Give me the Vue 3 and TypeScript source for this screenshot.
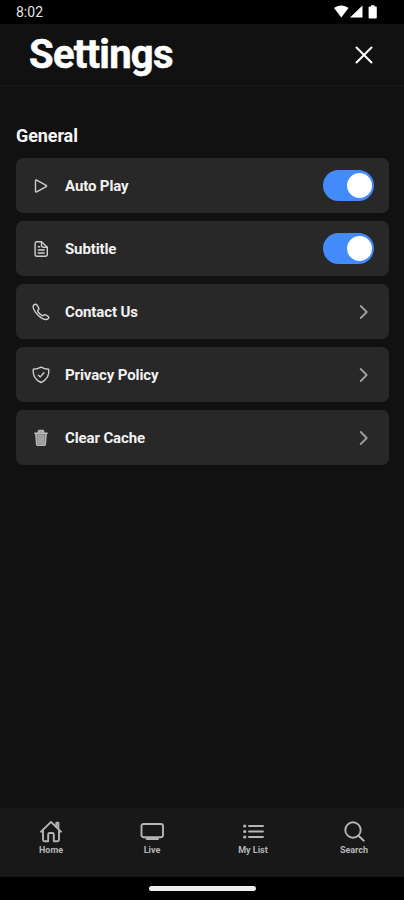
<script setup lang="ts">
import { ref } from 'vue'

type IconName = 'play' | 'document' | 'phone' | 'shield' | 'trash'

interface Setting {
  label: string
  icon: IconName
  toggle: boolean
}

const settings: Setting[] = [
  { label: 'Auto Play', icon: 'play', toggle: true },
  { label: 'Subtitle', icon: 'document', toggle: true },
  { label: 'Contact Us', icon: 'phone', toggle: false },
  { label: 'Privacy Policy', icon: 'shield', toggle: false },
  { label: 'Clear Cache', icon: 'trash', toggle: false },
]

const enabled = ref<Record<string, boolean>>({ 'Auto Play': true, Subtitle: true })

function activate(item: Setting) {
  if (item.toggle) enabled.value[item.label] = !enabled.value[item.label]
}

const tabs = ['Home', 'Live', 'My List', 'Search']
</script>

<template>
  <div class="screen">
    <div class="status">
      <span class="time">8:02</span>
      <svg class="signals" width="44" height="14" viewBox="0 0 44 14" fill="#fff">
        <path d="M0 3C4 -.5 10.500 -.5 14.500 3L7.300 12.500Z" />
        <path d="M28.500 .5V12.500H16Z" />
        <path d="M35.500 1.500h1.500V.3h3.500v1.200H42q.8 0 .8.900V12.600q0 .9-.8.900h-6.500q-.9 0-.9-.9V2.400q0-.9.900-.9Z" />
      </svg>
    </div>

    <header class="header">
      <h1>Settings</h1>
      <button class="close" aria-label="Close">
        <svg width="18" height="18" viewBox="0 0 18 18" fill="none" stroke="#fff" stroke-width="2" stroke-linecap="round">
          <path d="M1.500 1.500 16.500 16.500M16.500 1.500 1.500 16.500" />
        </svg>
      </button>
    </header>

    <main class="content">
      <h2>General</h2>
      <div class="list">
        <div v-for="item in settings" :key="item.label" class="row" @click="activate(item)">
          <svg class="icon" width="20" height="20" viewBox="0 0 20 20" fill="none" stroke="#cecece" stroke-width="1.400" stroke-linejoin="round" stroke-linecap="round">
            <path v-if="item.icon === 'play'" d="M4.500 5q0-1.300 1.100-.8l9.500 5.100q1 .7 0 1.400l-9.500 5.100q-1.100.5-1.100-.8Z" />
            <template v-else-if="item.icon === 'document'">
              <path d="M5.700 2.800h4.800l5.800 5.500v7q0 2-2 2H5.900q-1.800 0-1.800-2V4.600q0-1.800 1.600-1.800Z" />
              <path d="M10.500 3v3.600q0 1.700 1.700 1.700H16M7.200 11h6M7.200 14h6" />
              <path d="M7.200 7.800h1.500" />
            </template>
            <path v-else-if="item.icon === 'phone'" d="M3 2.800C1.600 4 2 6.800 4.400 10.200 7.400 14.300 12.500 18 15.400 17.500c1.100-.2 2.500-1.300 2.400-2.200-.1-.8-3.300-2.800-4.200-2.700-.9.200-1.300 1.300-2 1.200-1.400-.3-4.700-3.500-5-5 0-.7 1.200-1 1.300-1.900.1-.8-1.800-4-2.600-4.400-.6-.3-1.600-.1-2.300.3Z" />
            <template v-else-if="item.icon === 'shield'">
              <path d="M10 2.100C7.700 3.500 5 4.100 2.300 4.200c-.8 5.300 1.400 10.400 7.700 13.300 6.300-2.900 8.500-8 7.700-13.300C15 4.100 12.300 3.500 10 2.100Z" />
              <path d="m7.400 10.200 1.900 1.700 3.600-4.100" />
            </template>
            <template v-else>
              <path d="m4.800 6 .9 10.600q.1.800.9.800h6.800q.8 0 .9-.8L15.200 6" fill="#8c8c8c" stroke="#b8b8b8" />
              <path d="M3.800 5.200h12.400M6.900 4.700l.9-2.200h4.400l.9 2.200" fill="#a5a5a5" stroke="#bababa" />
              <path d="M7.800 7.200 8 15.500M10 7.200v8.300M12.200 7.200l-.2 8.300" stroke="#bbb" stroke-width=".9" />
            </template>
          </svg>
          <span class="label">{{ item.label }}</span>
          <span v-if="item.toggle" class="switch" :class="{ on: enabled[item.label] }" role="switch" :aria-checked="enabled[item.label]">
            <span class="knob"></span>
          </span>
          <svg v-else class="chevron" width="10" height="14" viewBox="0 0 10 14" fill="none" stroke="#a0a0a0" stroke-width="1.800" stroke-linecap="round" stroke-linejoin="round">
            <path d="M1.700 1 7.700 7l-6 6" />
          </svg>
        </div>
      </div>
    </main>

    <nav class="tabs">
      <a v-for="tab in tabs" :key="tab" class="tab">
        <svg width="24" height="24" viewBox="0 0 24 24" fill="none" stroke="#b5b5b5" stroke-width="1.900" stroke-linejoin="round" stroke-linecap="round">
          <path v-if="tab === 'Home'" d="M2 11.700 12 1.900l10 9.800M17.300 6V2.600h2.100v6.200M4 11v8.700q0 1.500 1.500 1.500h3.700v-6.700q0-1.500 1.500-1.500h2.600q1.500 0 1.500 1.500v6.700h3.700q1.500 0 1.500-1.500V11" />
          <template v-else-if="tab === 'Live'">
            <rect x="1.500" y="4" width="21.500" height="13.300" rx="2.200" />
            <path d="M6.700 19h11.300" stroke-width="2" />
          </template>
          <template v-else-if="tab === 'My List'">
            <path d="M8 6h14M8 11.500h14M8 17h14" />
            <path d="M3.700 6h.1M3.700 11.500h.1M3.700 17h.1" stroke-width="3.200" />
          </template>
          <template v-else>
            <circle cx="11" cy="10" r="7.700" />
            <path d="m16.500 15.700 5.300 5" />
          </template>
        </svg>
        <span class="tab-label">{{ tab }}</span>
      </a>
    </nav>
    <div class="gesture"><span></span></div>
  </div>
</template>

<style>
body {
  background: #000;
}
</style>

<style scoped>
.screen {
  width: 404px;
  height: 900px;
  display: flex;
  flex-direction: column;
  overflow: hidden;
  background: #111;
  color: #fff;
  font-family: Roboto, "Liberation Sans", sans-serif;
}
.status {
  height: 24px;
  flex: none;
  box-sizing: border-box;
  display: flex;
  align-items: center;
  justify-content: space-between;
  padding: 0 26px 0 16px;
  background: #000;
}
.time {
  font-size: 14px;
  color: #e4e4e4;
}
.header {
  height: 62px;
  flex: none;
  box-sizing: border-box;
  display: flex;
  align-items: center;
  justify-content: space-between;
  padding: 1px 31px 0 29px;
  border-bottom: 1px solid #1b1b1b;
}
h1 {
  margin: 0;
  font-size: 40px;
  line-height: 60px;
  font-weight: 700;
  letter-spacing: -0.75px;
  -webkit-text-stroke: 0.5px #fff;
}
.close {
  display: flex;
  margin: 0;
  padding: 0;
  border: 0;
  background: none;
}
.content {
  flex: 1;
  padding: 38px 15px 0 16px;
}
h2 {
  margin: 0;
  font-size: 18px;
  line-height: 24px;
  font-weight: 700;
  letter-spacing: -0.1px;
  color: #f6f6f6;
}
.list {
  display: flex;
  flex-direction: column;
  gap: 8px;
  margin-top: 10.400px;
}
.row {
  height: 55px;
  box-sizing: border-box;
  display: flex;
  align-items: center;
  padding: 0 15px;
  border-radius: 7px;
  background: #282828;
}
.icon {
  margin-left: -0.500px;
}
.label {
  flex: 1;
  margin-left: 14.500px;
  font-size: 15px;
  line-height: 20px;
  font-weight: 700;
  letter-spacing: -0.12px;
  color: #f2f2f2;
}
.switch {
  width: 51px;
  height: 31px;
  box-sizing: border-box;
  display: flex;
  padding: 3px 2px;
  border-radius: 16px;
  background: #555;
}
.switch.on {
  justify-content: flex-end;
  background: #438afa;
}
.knob {
  width: 25px;
  height: 25px;
  border-radius: 50%;
  background: #fff;
}
.chevron {
  margin-right: 5px;
}
.tabs {
  height: 69px;
  flex: none;
  box-sizing: border-box;
  display: grid;
  grid-template-columns: repeat(4, 1fr);
  padding-top: 12px;
  background: #181818;
}
.tab {
  display: flex;
  flex-direction: column;
  align-items: center;
  font-size: 9px;
  line-height: 12px;
  font-weight: 700;
  color: #b5b5b5;
}
.tab-label {
  padding-left: 1px;
}
.gesture {
  height: 23px;
  flex: none;
  display: flex;
  justify-content: center;
  background: #000;
}
.gesture span {
  width: 107px;
  height: 5px;
  margin-top: 9px;
  border-radius: 3px;
  background: #eee;
}
</style>
